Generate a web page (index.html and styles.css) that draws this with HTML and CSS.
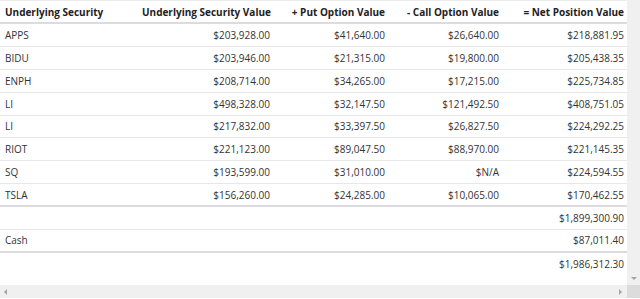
FILE: index.html
```html
<!DOCTYPE html>
<html>
<head>
<meta charset="utf-8">
<link rel="stylesheet" href="styles.css">
</head>
<body>
<div class="frame">
  <div class="main">
    <div class="grid">
      <div class="row head">
        <div class="c c1">Underlying Security</div>
        <div class="c c2">Underlying Security Value</div>
        <div class="c c3">+ Put Option Value</div>
        <div class="c c4">- Call Option Value</div>
        <div class="c c5">= Net Position Value</div>
      </div>
      <div class="row"><div class="c c1">APPS</div><div class="c c2">$203,928.00</div><div class="c c3">$41,640.00</div><div class="c c4">$26,640.00</div><div class="c c5">$218,881.95</div></div>
      <div class="row"><div class="c c1">BIDU</div><div class="c c2">$203,946.00</div><div class="c c3">$21,315.00</div><div class="c c4">$19,800.00</div><div class="c c5">$205,438.35</div></div>
      <div class="row"><div class="c c1">ENPH</div><div class="c c2">$208,714.00</div><div class="c c3">$34,265.00</div><div class="c c4">$17,215.00</div><div class="c c5">$225,734.85</div></div>
      <div class="row"><div class="c c1">LI</div><div class="c c2">$498,328.00</div><div class="c c3">$32,147.50</div><div class="c c4">$121,492.50</div><div class="c c5">$408,751.05</div></div>
      <div class="row"><div class="c c1">LI</div><div class="c c2">$217,832.00</div><div class="c c3">$33,397.50</div><div class="c c4">$26,827.50</div><div class="c c5">$224,292.25</div></div>
      <div class="row"><div class="c c1">RIOT</div><div class="c c2">$221,123.00</div><div class="c c3">$89,047.50</div><div class="c c4">$88,970.00</div><div class="c c5">$221,145.35</div></div>
      <div class="row"><div class="c c1">SQ</div><div class="c c2">$193,599.00</div><div class="c c3">$31,010.00</div><div class="c c4">$N/A</div><div class="c c5">$224,594.55</div></div>
      <div class="row thick"><div class="c c1">TSLA</div><div class="c c2">$156,260.00</div><div class="c c3">$24,285.00</div><div class="c c4">$10,065.00</div><div class="c c5">$170,462.55</div></div>
      <div class="row"><div class="c c1"></div><div class="c c2"></div><div class="c c3"></div><div class="c c4"></div><div class="c c5">$1,899,300.90</div></div>
      <div class="row thick"><div class="c c1">Cash</div><div class="c c2"></div><div class="c c3"></div><div class="c c4"></div><div class="c c5">$87,011.40</div></div>
      <div class="row last"><div class="c c1"></div><div class="c c2"></div><div class="c c3"></div><div class="c c4"></div><div class="c c5">$1,986,312.30</div></div>
    </div>
    <div class="vscroll"><span class="arrow down"></span></div>
  </div>
  <div class="hscroll">
    <span class="arrow left"></span>
    <span class="track"></span>
    <span class="arrow right"></span>
    <span class="corner"></span>
  </div>
</div>
</body>
</html>
```
FILE: styles.css
```css
html, body {
  margin: 0;
  padding: 0;
  background: #ffffff;
}
.frame {
  width: 640px;
  height: 299px;
  display: flex;
  flex-direction: column;
  font-family: "Open Sans", "Noto Sans", sans-serif;
  font-size: 10px;
  color: #333333;
}
.main {
  height: 285px;
  display: flex;
}
.grid {
  flex: 1;
  border-top: 1px solid #ececec;
  box-sizing: border-box;
}
.row {
  display: grid;
  grid-template-columns: 137px 136px 115px 114px 125px;
  height: 22.875px;
  box-sizing: border-box;
  border-bottom: 1px solid #e6e7ea;
  align-items: center;
}
.row.head {
  height: 23px;
  border-bottom: 2px solid #dadce2;
  font-weight: 700;
  color: #222222;
}
.row.thick {
  border-bottom: 2px solid #dadce2;
}
.row.last {
  border-bottom: none;
}
.c {
  white-space: nowrap;
  padding: 0 3px 0 5px;
  text-align: right;
}
.c1 {
  text-align: left;
}
.vscroll {
  width: 13px;
  background: #f0f0f0;
  display: flex;
  flex-direction: column;
  justify-content: flex-end;
  align-items: center;
  padding-bottom: 5px;
  box-sizing: border-box;
}
.hscroll {
  height: 13px;
  display: flex;
  background: #f0f0f0;
  align-items: center;
}
.track {
  flex: 1;
}
.corner {
  width: 13px;
  height: 13px;
  background: #dcdcdc;
}
.arrow {
  width: 0;
  height: 0;
  display: block;
}
.arrow.down {
  border-left: 3px solid transparent;
  border-right: 3px solid transparent;
  border-top: 3px solid #a3a3a3;
}
.arrow.left {
  margin-left: 4px;
  border-top: 3px solid transparent;
  border-bottom: 3px solid transparent;
  border-right: 3px solid #a3a3a3;
}
.arrow.right {
  margin-right: 5px;
  border-top: 3px solid transparent;
  border-bottom: 3px solid transparent;
  border-left: 3px solid #a3a3a3;
}
```
